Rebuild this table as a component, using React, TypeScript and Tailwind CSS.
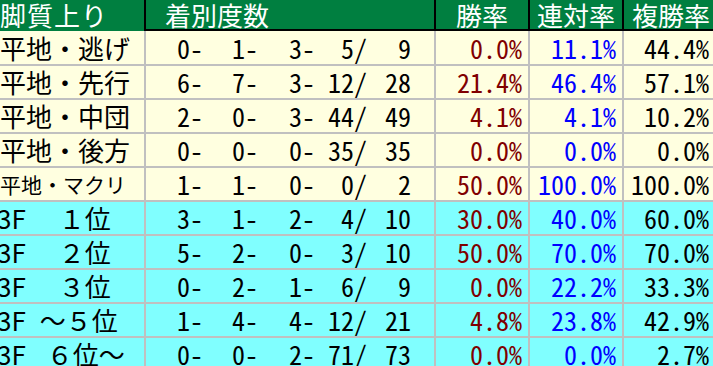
import React from "react";

type Row = {
  name: React.ReactNode;
  bg: string;
  counts: string[];
  win: string;
  ren: string;
  fuku: string;
  h: string;
};

const yellow = "bg-[#ffffe0]";
const cyan = "bg-[#80ffff]";

const rows: Row[] = [
  { name: "平地・逃げ", bg: yellow, counts: ["0-", "1-", "3-", "5/", "9"], win: "0.0%", ren: "11.1%", fuku: "44.4%", h: "h-[35px]" },
  { name: "平地・先行", bg: yellow, counts: ["6-", "7-", "3-", "12/", "28"], win: "21.4%", ren: "46.4%", fuku: "57.1%", h: "h-[34px]" },
  { name: "平地・中団", bg: yellow, counts: ["2-", "0-", "3-", "44/", "49"], win: "4.1%", ren: "4.1%", fuku: "10.2%", h: "h-[34px]" },
  { name: "平地・後方", bg: yellow, counts: ["0-", "0-", "0-", "35/", "35"], win: "0.0%", ren: "0.0%", fuku: "0.0%", h: "h-[34px]" },
  { name: <span className="text-[21px]">平地・マクリ</span>, bg: yellow, counts: ["1-", "1-", "0-", "0/", "2"], win: "50.0%", ren: "100.0%", fuku: "100.0%", h: "h-[34px]" },
  { name: <><span className="-ml-[3px]">3F</span><span className="ml-[33px]">１位</span></>, bg: cyan, counts: ["3-", "1-", "2-", "4/", "10"], win: "30.0%", ren: "40.0%", fuku: "60.0%", h: "h-[34px]" },
  { name: <><span className="-ml-[3px]">3F</span><span className="ml-[33px]">２位</span></>, bg: cyan, counts: ["5-", "2-", "0-", "3/", "10"], win: "50.0%", ren: "70.0%", fuku: "70.0%", h: "h-[34px]" },
  { name: <><span className="-ml-[3px]">3F</span><span className="ml-[33px]">３位</span></>, bg: cyan, counts: ["0-", "2-", "1-", "6/", "9"], win: "0.0%", ren: "22.2%", fuku: "33.3%", h: "h-[34px]" },
  { name: <><span className="-ml-[3px]">3F</span><span className="ml-[14px]">～５位</span></>, bg: cyan, counts: ["1-", "4-", "4-", "12/", "21"], win: "4.8%", ren: "23.8%", fuku: "42.9%", h: "h-[34px]" },
  { name: <><span className="-ml-[3px]">3F</span><span className="ml-[21px]">６位～</span></>, bg: cyan, counts: ["0-", "0-", "2-", "71/", "73"], win: "0.0%", ren: "0.0%", fuku: "2.7%", h: "h-[34px]" },
];

const slotW = ["w-[57px]", "w-[55px]", "w-[57px]", "w-[52px]", "w-[44px]"];

// half-width forms make the latin digits and signs monospaced like the original
const num = "[font-feature-settings:'hwid']";

export default function App() {
  return (
    <div className="w-[713px] h-[366px] overflow-hidden bg-white font-['Noto_Sans_CJK_JP',sans-serif] text-[26px] leading-none text-black">
      <div className="w-[718px]">
        {/* header */}
        <div className="flex h-[31px] bg-[#007f40] text-white">
          <div className="w-[146px] border-r-2 border-black flex items-center pb-[2px] whitespace-nowrap tracking-[1px]">脚質上り</div>
          <div className="w-[290px] border-r-2 border-b-2 border-black flex items-center pl-[19px]">着別度数</div>
          <div className="w-[94px] border-r-2 border-b-2 border-black flex items-center justify-center">勝率</div>
          <div className="w-[94px] border-r-2 border-b-2 border-black flex items-center justify-center">連対率</div>
          <div className="w-[94px] border-b-2 border-black flex items-center justify-center">複勝率</div>
        </div>

        {rows.map((r, i) => (
          <div key={i} className={`flex ${r.h} ${r.bg}`}>
            <div className="w-[146px] border-r-2 border-b-2 border-[#c0c0c0] flex items-center whitespace-nowrap">{r.name}</div>
            <div className={`w-[290px] border-r-2 border-b-2 border-[#c0c0c0] flex items-center ${num}`}>
              {r.counts.map((c, j) => (
                <span key={j} className={`${slotW[j]} text-right`}>{c}</span>
              ))}
            </div>
            <div className={`w-[94px] border-r-2 border-b-2 border-[#c0c0c0] flex items-center justify-end pr-[6px] text-[#800000] ${num}`}>{r.win}</div>
            <div className={`w-[94px] border-r-2 border-b-2 border-[#c0c0c0] flex items-center justify-end pr-[6px] text-[#0000ff] ${num}`}>{r.ren}</div>
            <div className={`w-[94px] border-b-2 border-[#c0c0c0] flex items-center justify-end pr-[9px] ${num}`}>{r.fuku}</div>
          </div>
        ))}
      </div>
    </div>
  );
}
